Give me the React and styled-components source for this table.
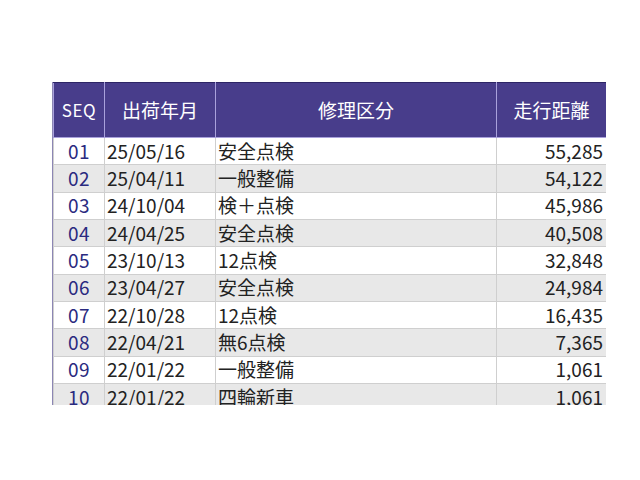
import React from "react";
import styled, { createGlobalStyle } from "styled-components";

const Global = createGlobalStyle`
  html, body { margin: 0; padding: 0; background: #ffffff; }
  body { font-family: "Noto Sans CJK JP", "Noto Sans", sans-serif; }
`;

const Page = styled.div`
  padding: 82px 0 0 52px;
`;

const ScrollBox = styled.div`
  width: 554px;
  height: 323px;
  overflow: hidden;
  border-left: 1px solid #8c86b4;
  box-sizing: border-box;
`;

const Table = styled.table`
  width: 553px;
  table-layout: fixed;
  border-collapse: collapse;
`;

const Th = styled.th`
  height: 52px;
  padding: 0 0 2px 0;
  background: #483d8b;
  color: #ffffff;
  font-weight: 400;
  font-size: ${(p) => (p.$small ? "17px" : "19px")};
  letter-spacing: ${(p) => (p.$small ? "0.5px" : "0")};
  line-height: 1;
  text-align: center;
  border: 1px solid #a9a1dc;
  border-top: 1px solid #2d2566;
`;

const Row = styled.tr`
  background: ${(p) => (p.$alt ? "#e8e8e8" : "#ffffff")};
`;

const Td = styled.td`
  height: 24.35px;
  padding: 0 ${(p) => (p.$align === "right" ? "3px" : "2px")} 2px 2px;
  font-size: 19px;
  line-height: 1;
  letter-spacing: ${(p) => (p.$seq ? "0.5px" : "0")};
  color: ${(p) => (p.$seq ? "#2a2a80" : "#222222")};
  text-align: ${(p) => p.$align || "left"};
  border: 1px solid #cfcfcf;
  white-space: nowrap;
  overflow: hidden;
`;

const rows = [
  ["01", "25/05/16", "安全点検", "55,285"],
  ["02", "25/04/11", "一般整備", "54,122"],
  ["03", "24/10/04", "検＋点検", "45,986"],
  ["04", "24/04/25", "安全点検", "40,508"],
  ["05", "23/10/13", "12点検", "32,848"],
  ["06", "23/04/27", "安全点検", "24,984"],
  ["07", "22/10/28", "12点検", "16,435"],
  ["08", "22/04/21", "無6点検", "7,365"],
  ["09", "22/01/22", "一般整備", "1,061"],
  ["10", "22/01/22", "四輪新車", "1,061"],
];

export default function App() {
  return (
    <Page>
      <Global />
      <ScrollBox>
        <Table>
          <colgroup>
            <col style={{ width: 51 }} />
            <col style={{ width: 111 }} />
            <col style={{ width: 281 }} />
            <col style={{ width: 110 }} />
          </colgroup>
          <thead>
            <tr>
              <Th $small>SEQ</Th>
              <Th>出荷年月</Th>
              <Th>修理区分</Th>
              <Th>走行距離</Th>
            </tr>
          </thead>
          <tbody>
            {rows.map((r, i) => (
              <Row key={r[0]} $alt={i % 2 === 1}>
                <Td $seq $align="center">{r[0]}</Td>
                <Td>{r[1]}</Td>
                <Td>{r[2]}</Td>
                <Td $align="right">{r[3]}</Td>
              </Row>
            ))}
          </tbody>
        </Table>
      </ScrollBox>
    </Page>
  );
}
